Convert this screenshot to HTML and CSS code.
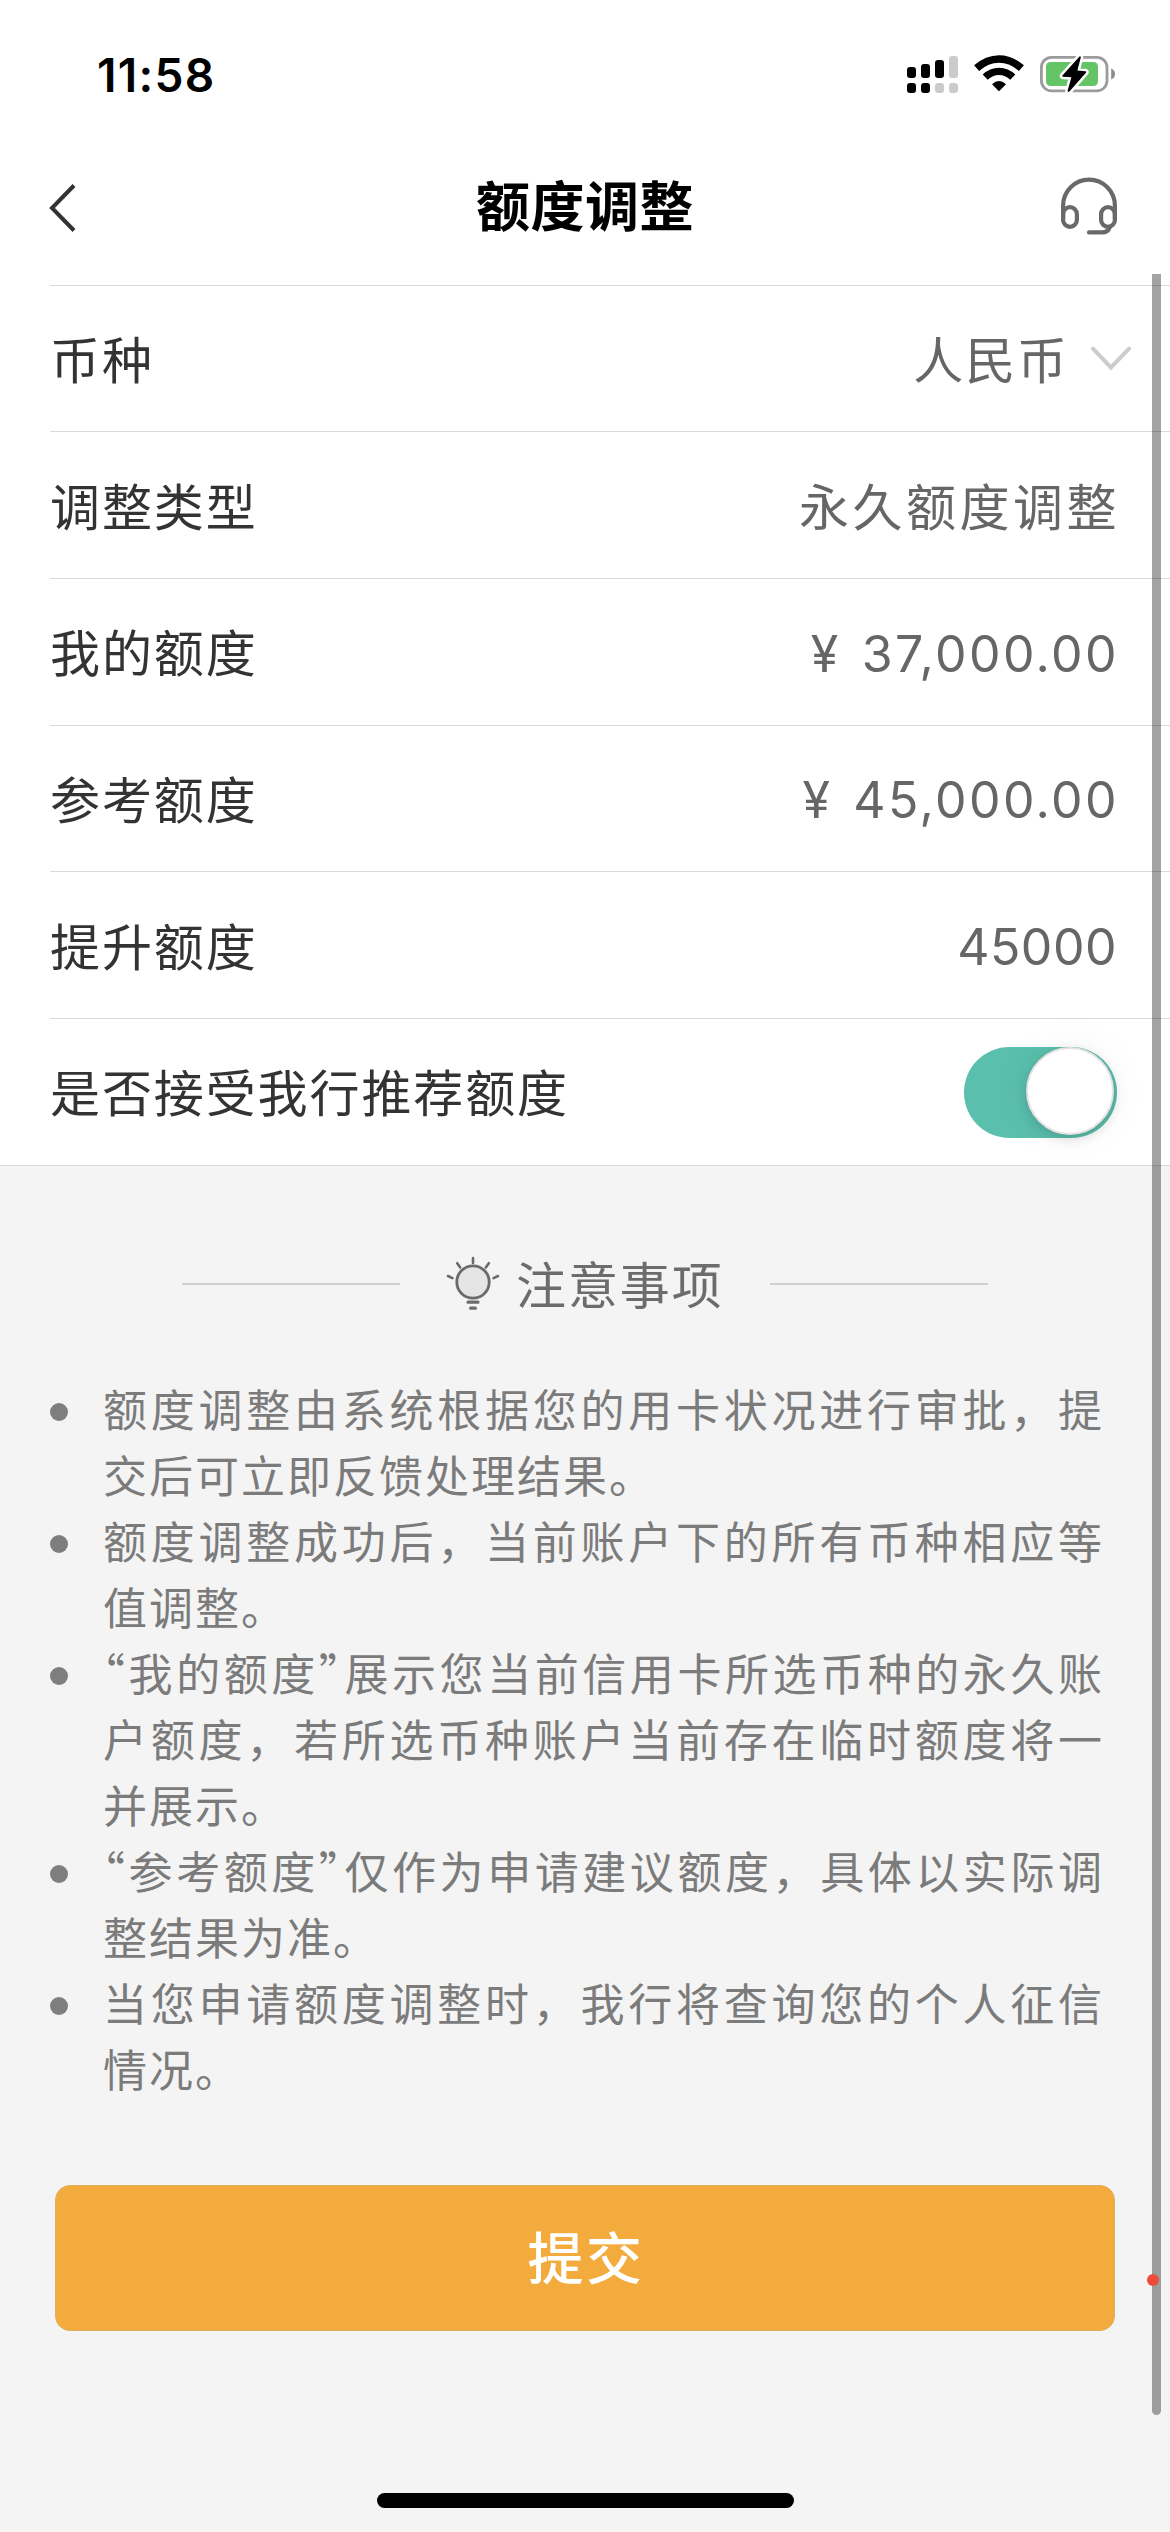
FILE: index.html
```html
<!DOCTYPE html>
<html lang="zh-CN">
<head>
<meta charset="utf-8">
<title>额度调整</title>
<link rel="stylesheet" href="styles.css">
</head>
<body>
<div class="phone">
  <header class="status">
    <span class="clock">11:58</span>
    <svg class="status-icons" width="210" height="40" viewBox="0 0 210 40">
      <g>
        <rect x="1" y="13" width="9" height="11" rx="3"/>
        <rect x="15" y="10" width="9" height="14" rx="3"/>
        <rect x="29" y="6" width="9" height="18" rx="3"/>
        <rect x="43" y="2" width="9" height="22" rx="3" fill="#cbcbcb"/>
        <rect x="1" y="29" width="9" height="10" rx="3"/>
        <rect x="15" y="29" width="9" height="10" rx="3"/>
        <rect x="29" y="29" width="9" height="10" rx="3" fill="#cbcbcb"/>
        <rect x="43" y="29" width="9" height="10" rx="3" fill="#cbcbcb"/>
      </g>
      <g>
        <path d="M70.6 14.2Q81 5 93 5T115.4 14.2" fill="none" stroke="#000" stroke-width="7.6"/>
        <path d="M79.2 23.2Q85.2 17.4 93 17.4T106.8 23.2" fill="none" stroke="#000" stroke-width="7.2"/>
        <path d="M86 30.2Q93 24 100 30.2L93.6 36.7Q93 37.2 92.4 36.7Z"/>
      </g>
      <g>
        <rect x="135.4" y="3.4" width="65.6" height="33.4" rx="10" fill="none" stroke="#9b9b9b" stroke-width="2.8"/>
        <path d="M205.2 14.5Q209 16 209 20T205.2 25.5Z" fill="#8c8c8c"/>
        <rect x="140" y="8" width="52" height="24" rx="4.5" fill="#65c466"/>
        <path d="M173.5 2.5L156.4 21.4Q155.6 22.6 157.2 22.8L165.4 23.2L161.6 36.8Q161.8 38.6 163.4 37.6L180 18.8Q180.8 17.4 179.4 17.2L171.4 16.6L174.8 3.4Q174.6 1.8 173.5 2.5Z" stroke="#fff" stroke-width="5" stroke-linejoin="round" paint-order="stroke"/>
      </g>
    </svg>
  </header>

  <nav class="nav">
    <svg class="back" width="28" height="48" viewBox="0 0 28 48"><path d="M26 1.5L4 24L26 46.5" fill="none" stroke="#333" stroke-width="4"/></svg>
    <h1 class="title">额度调整</h1>
    <svg class="headset" width="58" height="60" viewBox="0 0 58 60" fill="none" stroke="#696969" stroke-width="4.2" stroke-linecap="round">
      <path d="M3.1 42V28.6A25.9 25.9 0 0 1 54.9 28.6V42"/>
      <rect x="3.1" y="30.2" width="13.8" height="19.6" rx="6.9"/>
      <rect x="41.1" y="30.2" width="13.8" height="19.6" rx="6.9"/>
      <path d="M49.6 50.5Q48 55.4 42 55.4H29"/>
    </svg>
  </nav>

  <main>
    <section class="form">
      <div class="row"><span class="label">币种</span><span class="value select">人民币<svg width="42" height="26" viewBox="0 0 42 26"><path d="M3 2.7L21 21.5L39 2.7" fill="none" stroke="#ccc" stroke-width="4" stroke-linecap="round"/></svg></span></div>
      <div class="row"><span class="label">调整类型</span><span class="value">永久额度调整</span></div>
      <div class="row"><span class="label">我的额度</span><span class="value money"><span class="yen">¥</span>37,000.00</span></div>
      <div class="row"><span class="label">参考额度</span><span class="value money"><span class="yen">¥</span>45,000.00</span></div>
      <div class="row"><span class="label">提升额度</span><span class="value money amount">45000</span></div>
      <div class="row"><span class="label">是否接受我行推荐额度</span><span class="switch"><span class="knob"></span></span></div>
    </section>

    <section class="notes">
      <h2 class="notes-head">
        <svg width="56" height="56" viewBox="0 0 56 56" fill="none" stroke="#6b6b6b" stroke-linecap="round">
          <circle cx="28" cy="27" r="16.2" fill="#e5e5e5" stroke-width="2.8"/>
          <path d="M28 3V8M12.2 8.2L15.2 12.4M43.8 8.2L40.8 12.4M3 21L7.4 23.2M53 21L48.6 23.2" stroke-width="2.6"/>
          <path d="M23 47.2H33M25.6 53.2H30.4" stroke-width="3.2"/>
        </svg>
        <span class="notes-title">注意事项</span>
      </h2>
      <ul class="list">
        <li><p>额度调整由系统根据您的用卡状况进行审批，提交后可立即反馈处理结果。</p></li>
        <li><p>额度调整成功后，当前账户下的所有币种相应等值调整。</p></li>
        <li><p><span class="q">“</span>我的额度<span class="q">”</span>展示您当前信用卡所选币种的永久账户额度，若所选币种账户当前存在临时额度将一并展示。</p></li>
        <li><p><span class="q">“</span>参考额度<span class="q">”</span>仅作为申请建议额度，具体以实际调整结果为准。</p></li>
        <li><p>当您申请额度调整时，我行将查询您的个人征信情况。</p></li>
      </ul>
      <button class="submit">提交</button>
    </section>
  </main>

  <div class="scrollbar"></div>
  <div class="dot"></div>
  <div class="home"></div>
</div>
</body>
</html>
```
FILE: styles.css
```css
* { box-sizing: border-box; margin: 0; padding: 0; }

body {
  width: 1170px;
  font-family: "Noto Sans CJK SC", "Inter", sans-serif;
  background: #f4f4f4;
}

.phone {
  position: relative;
  display: flex;
  flex-direction: column;
  width: 1170px;
  height: 2532px;
  overflow: hidden;
}

.status {
  display: flex;
  justify-content: space-between;
  height: 122px;
  padding: 54px 54px 0 97px;
  background: #fff;
}

.clock {
  font: 600 46px/42px "Inter", sans-serif;
  letter-spacing: 1.3px;
}

.nav {
  display: flex;
  align-items: center;
  justify-content: space-between;
  height: 162.7px;
  padding: 0 52px 0 48px;
  background: #fff;
}

.back { margin-top: 9px; }
.headset { margin-top: 7px; }

.title {
  font-size: 54px;
  font-weight: 600;
  line-height: 80px;
  letter-spacing: 0.5px;
  margin: 2px 0 0 34px;
}

.form {
  padding-left: 50px;
  background: #fff;
  border-bottom: 1px solid #dadada;
}

.row {
  display: flex;
  align-items: center;
  justify-content: space-between;
  height: 146.66px;
  padding-right: 53px;
  border-top: 1px solid #dadada;
}

.label {
  font-size: 50px;
  letter-spacing: 1.9px;
  padding-bottom: 3px;
  color: #333;
}

.value {
  font-size: 50px;
  letter-spacing: 3.5px;
  padding-bottom: 3px;
  margin-right: -3px;
  color: #666;
}

.select {
  display: flex;
  align-items: center;
  gap: 21px;
  margin-right: -15px;
  letter-spacing: 1.9px;
}

.select svg { margin-top: 4px; }

.money {
  font-family: "Inter", sans-serif;
  letter-spacing: 2.4px;
  padding: 4px 0 0;
  margin-right: -2px;
}

.yen { margin-right: 21px; }

.amount {
  letter-spacing: 0.5px;
  margin-right: 0;
}

.switch {
  width: 153px;
  height: 91px;
  margin-top: 2px;
  border-radius: 46px;
  background: #5bbfad;
}

.knob {
  display: block;
  width: 88px;
  height: 88px;
  margin-left: 62px;
  border: 2.5px solid #e6e2e3;
  border-radius: 50%;
  background: #fff;
  box-shadow: 0 4px 12px rgba(0, 0, 0, 0.14), 0 0 40px rgba(0, 0, 0, 0.05);
}

.notes {
  display: flex;
  flex-direction: column;
  padding: 82px 55px 0 50px;
}

.notes-head {
  display: flex;
  align-items: center;
  width: 806px;
  height: 72px;
  margin-left: 132px;
  font-weight: 400;
}

.notes-head::before,
.notes-head::after {
  content: "";
  flex: 0 0 218px;
  height: 2px;
  background: #d0d0d0;
}

.notes-head::after { margin-left: auto; }

.notes-head svg { margin: -1px 15px 0 45px; }

.notes-title {
  font-size: 50px;
  line-height: 72px;
  letter-spacing: 1.9px;
  padding-bottom: 3px;
  color: #6c6c6c;
}

.list {
  margin-top: 55px;
  list-style: none;
  color: #7b7b7b;
}

.list li {
  display: flex;
  gap: 35px;
}

.list li::before {
  content: "";
  flex: 0 0 18px;
  height: 18px;
  margin-top: 28px;
  border-radius: 50%;
  background: #7e7e7e;
}

.list p {
  width: 1001px;
  font-size: 44px;
  line-height: 66px;
  letter-spacing: 2px;
  text-align: justify;
}

.q { font-feature-settings: "halt"; }

.submit {
  height: 146px;
  margin: 84px 0 0 5px;
  padding: 0 0 7px 2px;
  border: 1px solid #dfb061;
  border-radius: 15px;
  background: #f2ab3c;
  font-family: inherit;
  font-size: 56px;
  font-weight: 500;
  letter-spacing: 2.5px;
  color: #fff;
}

.scrollbar {
  position: absolute;
  top: 274px;
  left: 1152px;
  width: 9px;
  height: 2141px;
  border-radius: 0 0 5px 5px;
  background: rgba(0, 0, 0, 0.36);
}

.dot {
  position: absolute;
  top: 2274px;
  left: 1147px;
  width: 12px;
  height: 12px;
  border-radius: 50%;
  background: #ec4c39;
}

.home {
  position: absolute;
  top: 2493px;
  left: 377px;
  width: 417px;
  height: 15px;
  border-radius: 8px;
  background: #000;
}
```
